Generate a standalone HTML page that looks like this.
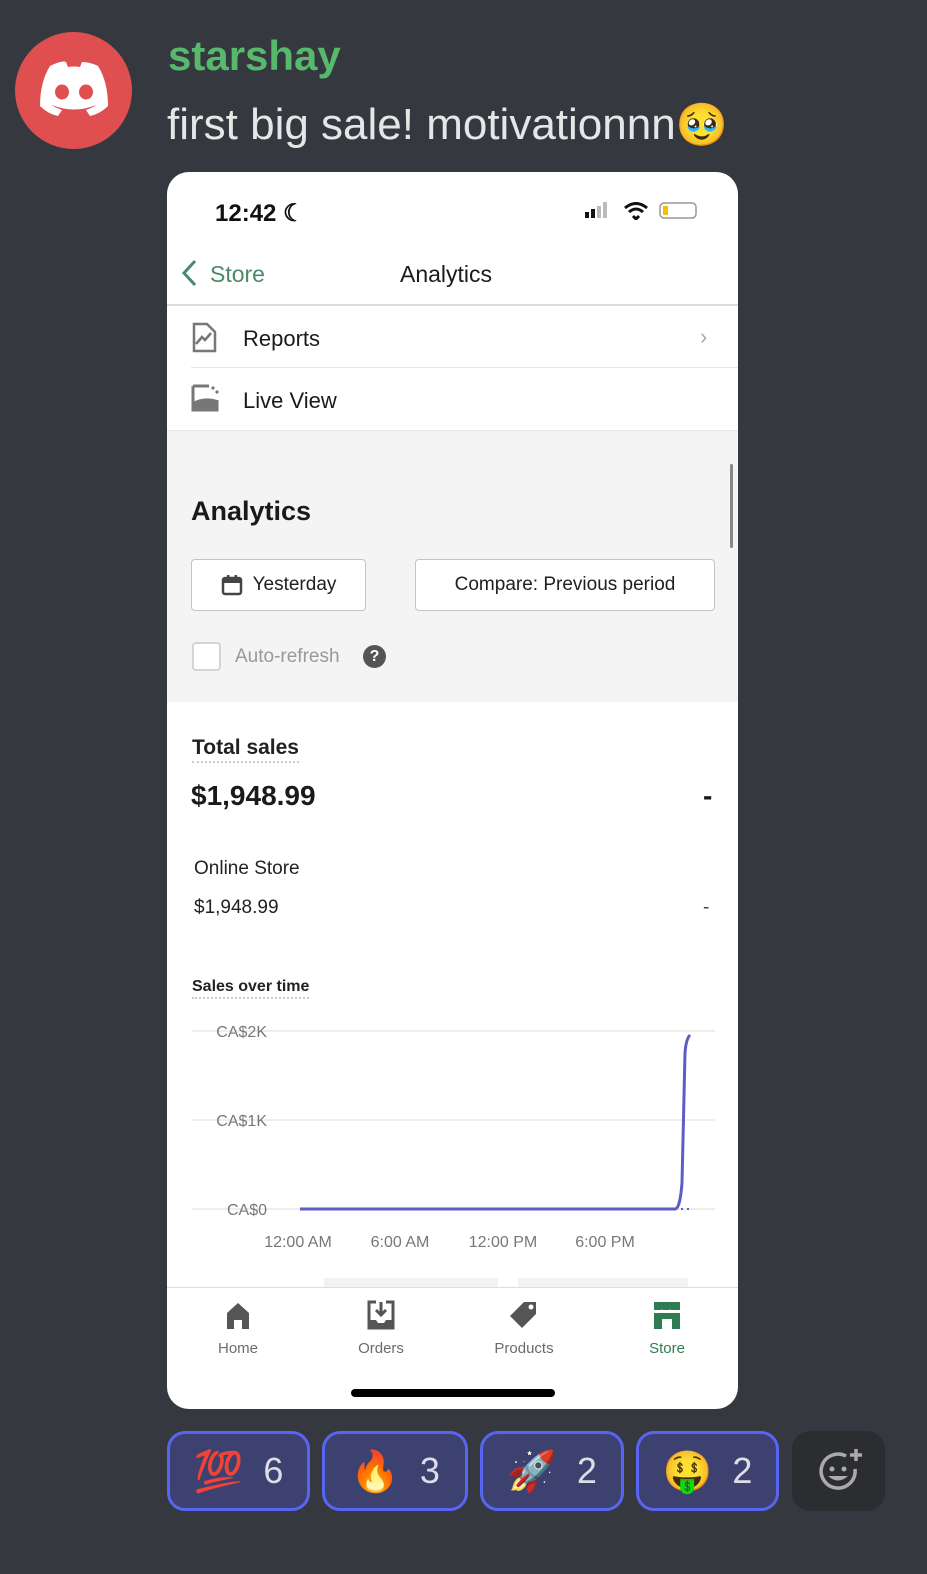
<!DOCTYPE html>
<html><head><meta charset="utf-8"><style>
*{margin:0;padding:0;box-sizing:border-box}
body{width:927px;height:1574px;background:#36383f;font-family:"Liberation Sans",sans-serif;position:relative;overflow:hidden}
.a{position:absolute;white-space:nowrap}
.ph{position:absolute;left:167px;top:172px;width:571px;height:1237px;background:#fff;border-radius:22px;overflow:hidden}
.btn{position:absolute;background:#fff;border:1px solid #c4c4c4;border-radius:4px;font-size:19px;color:#202020;display:flex;align-items:center;justify-content:center}
.r{position:absolute;top:1431px;height:80px;background:#3d4170;border:3px solid #5865f2;border-radius:18px;display:flex;align-items:center;justify-content:center;gap:20px;font-size:36px;color:#dcdde6}
.r .e{font-size:40px}
.t{color:#6b6b6b;font-size:15px;text-align:center}
</style></head><body>
<div class="a" style="left:15px;top:32px;width:117px;height:117px;border-radius:50%;background:#e04f4f"></div>
<svg class="a" style="left:38px;top:60px" width="72" height="58" viewBox="0 0 72 58"><path d="M12 6 Q24 0 28 2 L30 7 Q36 6 42 7 L44 2 Q52 2 60 6 Q70 22 70 46 Q62 54 52 56 L48 50 Q56 47 58 45 Q36 54 14 45 Q16 47 24 50 L20 56 Q10 54 2 46 Q2 22 12 6Z" fill="#fff"/><ellipse cx="24" cy="32" rx="7" ry="7.5" fill="#e04f4f"/><ellipse cx="48" cy="32" rx="7" ry="7.5" fill="#e04f4f"/></svg>
<div class="a" style="left:168px;top:32px;font-size:42px;font-weight:bold;color:#57b96c">starshay</div>
<div class="a" style="left:167px;top:100px;font-size:44px;color:#e6e6e6">first big sale! motivationnn<span style="font-size:42px">🥹</span></div>
<div class="ph">
<div class="a" style="left:48px;top:27px;font-size:24px;font-weight:bold;color:#111">12:42 ☾</div>
<svg class="a" style="left:418px;top:30px" width="116" height="18"><rect x="0" y="10" width="4" height="6" fill="#111"/><rect x="6" y="7" width="4" height="9" fill="#111"/><rect x="12" y="4" width="4" height="12" fill="#bbb"/><rect x="18" y="0" width="4" height="16" fill="#bbb"/><path d="M40 6 Q51 -3 62 6 M44 10 Q51 4 58 10 M48 14 L51 17 L54 14" stroke="#111" stroke-width="3" fill="none"/><rect x="75" y="1" width="36" height="15" rx="4" fill="none" stroke="#999" stroke-width="1.5"/><rect x="78" y="4" width="5" height="9" fill="#f2c200"/></svg>
<svg class="a" style="left:12px;top:86px" width="20" height="30"><path d="M16 3 L5 15 L16 27" stroke="#4a8a6a" stroke-width="3" fill="none"/></svg>
<div class="a" style="left:43px;top:89px;font-size:23px;color:#4a8a6a">Store</div>
<div class="a" style="left:233px;top:89px;font-size:23px;color:#1a1a1a">Analytics</div>
<div class="a" style="left:0;top:132px;width:571px;height:2px;background:#ddd"></div>
<svg class="a" style="left:24px;top:150px" width="28" height="32"><path d="M3 2 H16 L24 10 V29 H3Z" fill="none" stroke="#777" stroke-width="2.5"/><path d="M5 22 L11 15 L14 18 L20 11" stroke="#777" stroke-width="2.5" fill="none"/></svg>
<div class="a" style="left:76px;top:154px;font-size:22px;color:#1a1a1a">Reports</div>
<div class="a" style="left:533px;top:152px;font-size:22px;color:#aaa">›</div>
<div class="a" style="left:24px;top:195px;width:547px;height:1px;background:#e6e6e6"></div>
<svg class="a" style="left:24px;top:212px" width="28" height="28"><path d="M2 2 H18 M2 2 V26 H26 V16" stroke="#777" stroke-width="3" fill="none"/><path d="M2 18 Q14 12 26 16 V26 H2Z" fill="#777"/><circle cx="22" cy="4" r="1.6" fill="#777"/><circle cx="26" cy="8" r="1.6" fill="#777"/></svg>
<div class="a" style="left:76px;top:216px;font-size:22px;color:#1a1a1a">Live View</div>
<div class="a" style="left:0;top:258px;width:571px;height:272px;background:#f4f4f4;border-top:1px solid #e6e6e6"></div>
<div class="a" style="left:563px;top:292px;width:3px;height:84px;background:#888;border-radius:2px"></div>
<div class="a" style="left:24px;top:324px;font-size:27px;font-weight:bold;color:#1a1a1a">Analytics</div>
<div class="btn" style="left:24px;top:387px;width:175px;height:52px"><svg width="22" height="22" style="margin-right:10px"><rect x="2" y="4" width="18" height="16" rx="2" fill="none" stroke="#444" stroke-width="2.5"/><rect x="2" y="4" width="18" height="5" fill="#444"/><rect x="6" y="1" width="2.5" height="5" fill="#444"/><rect x="13.5" y="1" width="2.5" height="5" fill="#444"/></svg>Yesterday</div>
<div class="btn" style="left:248px;top:387px;width:300px;height:52px">Compare: Previous period</div>
<div class="a" style="left:25px;top:470px;width:29px;height:29px;border:2px solid #d4d4d4;border-radius:4px;background:#fff"></div>
<div class="a" style="left:68px;top:474px;font-size:19px;color:#999">Auto-refresh</div>
<div class="a" style="left:196px;top:473px;width:23px;height:23px;border-radius:50%;background:#555;color:#fff;font-size:16px;font-weight:bold;text-align:center;line-height:23px">?</div>
<div class="a" style="left:25px;top:564px;font-size:21px;font-weight:bold;color:#222;border-bottom:2px dotted #ccc;padding-bottom:1px">Total sales</div>
<div class="a" style="left:24px;top:608px;font-size:28px;font-weight:bold;color:#1a1a1a">$1,948.99</div>
<div class="a" style="left:536px;top:608px;font-size:28px;font-weight:bold;color:#1a1a1a">-</div>
<div class="a" style="left:27px;top:686px;font-size:19px;color:#222">Online Store</div>
<div class="a" style="left:27px;top:725px;font-size:19px;color:#222">$1,948.99</div>
<div class="a" style="left:536px;top:725px;font-size:19px;color:#444">-</div>
<div class="a" style="left:25px;top:806px;font-size:16px;font-weight:bold;color:#222;border-bottom:2px dotted #ccc;padding-bottom:1px">Sales over time</div>
<svg class="a" style="left:0;top:841px" width="571" height="240"><g stroke="#e8e8e8" stroke-width="1.5"><line x1="25" y1="18" x2="548" y2="18"/><line x1="25" y1="107" x2="548" y2="107"/><line x1="25" y1="196" x2="548" y2="196"/></g><g fill="#777" font-size="16" font-family="Liberation Sans" text-anchor="end"><text x="100" y="24" fill="#777">CA$2K</text><text x="100" y="113">CA$1K</text><text x="100" y="202">CA$0</text></g><path d="M133 196 H508 Q513 196 515 170 L518 40 Q519 26 523 22" stroke="#5a5ec6" stroke-width="3" fill="none"/><path d="M514 196 H522" stroke="#5a5ec6" stroke-width="2" stroke-dasharray="2 4"/><g fill="#777" font-size="16" font-family="Liberation Sans" text-anchor="middle"><text x="131" y="234">12:00 AM</text><text x="233" y="234">6:00 AM</text><text x="336" y="234">12:00 PM</text><text x="438" y="234">6:00 PM</text></g></svg>
<div class="a" style="left:157px;top:1106px;width:174px;height:9px;background:#f2f2f2"></div>
<div class="a" style="left:351px;top:1106px;width:170px;height:9px;background:#f2f2f2"></div>
<div class="a" style="left:0;top:1115px;width:571px;height:1px;background:#ddd"></div>
<svg class="a" style="left:58px;top:1129px" width="26" height="28"><path d="M2 12 L13 2 L24 12 V28 H17 V19 H9 V28 H2Z" fill="#555"/></svg>
<svg class="a" style="left:200px;top:1128px" width="28" height="30"><path d="M9 2 H2 V28 H26 V2 H19" fill="none" stroke="#555" stroke-width="3"/><path d="M2 20 H9 L11 23 H17 L19 20 H26 V28 H2Z" fill="#555"/><path d="M14 2 V15 M9 10 L14 15 L19 10" stroke="#555" stroke-width="3" fill="none"/></svg>
<svg class="a" style="left:343px;top:1128px" width="28" height="28"><path d="M14 2 H26 V14 L12 28 L0 16Z" fill="#555"/><circle cx="21" cy="7" r="2.5" fill="#fff"/></svg>
<svg class="a" style="left:486px;top:1129px" width="28" height="28"><rect x="1" y="1" width="26" height="8" fill="#2e7d52"/><path d="M1 9 L5 12 L9 9 L13 12 L17 9 L21 12 L25 9" stroke="#fff" stroke-width="1" fill="none"/><path d="M1 12 H27 V28 H19 V18 H9 V28 H1Z" fill="#2e7d52"/></svg>
<div class="a t" style="left:21px;top:1168px;width:100px">Home</div>
<div class="a t" style="left:164px;top:1168px;width:100px">Orders</div>
<div class="a t" style="left:307px;top:1168px;width:100px">Products</div>
<div class="a t" style="left:450px;top:1168px;width:100px;color:#2e7d52">Store</div>
<div class="a" style="left:184px;top:1217px;width:204px;height:8px;border-radius:4px;background:#000"></div>
</div>
<div class="r" style="left:167px;width:143px"><span class="e">💯</span>6</div>
<div class="r" style="left:322px;width:146px"><span class="e">🔥</span>3</div>
<div class="r" style="left:480px;width:144px"><span class="e">🚀</span>2</div>
<div class="r" style="left:636px;width:143px"><span class="e">🤑</span>2</div>
<div class="a" style="left:792px;top:1431px;width:93px;height:80px;background:#2b2d31;border-radius:18px"></div>
<svg class="a" style="left:816px;top:1447px" width="48" height="44"><path d="M30 9 A17 17 0 1 0 39 22" stroke="#aaa" stroke-width="3.5" fill="none"/><circle cx="16" cy="22" r="2.5" fill="#aaa"/><circle cx="28" cy="22" r="2.5" fill="#aaa"/><path d="M12 29 Q22 38 32 29Z" fill="#aaa"/><path d="M40 2 V14 M34 8 H46" stroke="#aaa" stroke-width="3.5"/></svg>
</body></html>
